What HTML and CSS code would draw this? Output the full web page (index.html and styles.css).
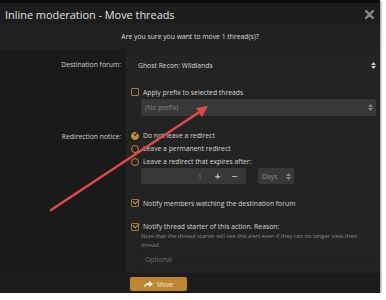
FILE: index.html
```html
<!DOCTYPE html>
<html lang="en">
<head>
  <meta charset="UTF-8">
  <title>Inline moderation - Move threads</title>
  <link rel="stylesheet" href="styles.css">
</head>
<body>
  <div class="overlay">
    <div class="dialog">
      <div class="title-bar">
        <span class="title">Inline moderation - Move threads</span>
        <svg class="close" width="9" height="9" viewBox="0 0 9 9">
          <path d="M1 1 L8 8 M8 1 L1 8" stroke="#8a8a80" stroke-width="2.4" stroke-linecap="round"/>
        </svg>
      </div>

      <div class="message">Are you sure you want to move 1 thread(s)?</div>

      <div class="form">
        <div class="label row-dest">Destination forum:</div>
        <div class="field row-dest">
          <div class="select plain">
            <span>Ghost Recon: Wildlands</span>
            <svg class="arrows" width="5" height="7" viewBox="0 0 5 7"><path d="M0 3 L2.5 0 L5 3 Z M0 4 L2.5 7 L5 4 Z" fill="#ccc"/></svg>
          </div>
        </div>

        <div class="label"></div>
        <div class="field row-prefix">
          <label class="check"><span class="box"></span>Apply prefix to selected threads</label>
          <div class="select filled">
            <span class="muted">(No prefix)</span>
            <svg class="arrows" width="5" height="7" viewBox="0 0 5 7"><path d="M0 3 L2.5 0 L5 3 Z M0 4 L2.5 7 L5 4 Z" fill="#888"/></svg>
          </div>
        </div>

        <div class="label row-redirect">Redirection notice:</div>
        <div class="field row-redirect">
          <label class="check"><span class="radio on"></span>Do not leave a redirect</label>
          <label class="check"><span class="radio"></span>Leave a permanent redirect</label>
          <label class="check"><span class="radio"></span>Leave a redirect that expires after:</label>
          <div class="expire">
            <div class="number">
              <span class="num">1</span>
              <span class="step">+</span>
              <span class="step">&minus;</span>
            </div>
            <div class="select filled days">
              <span class="muted">Days</span>
              <svg class="arrows" width="5" height="7" viewBox="0 0 5 7"><path d="M0 3 L2.5 0 L5 3 Z M0 4 L2.5 7 L5 4 Z" fill="#888"/></svg>
            </div>
          </div>
        </div>

        <div class="label"></div>
        <div class="field row-watch">
          <label class="check"><span class="box on"></span>Notify members watching the destination forum</label>
        </div>

        <div class="label"></div>
        <div class="field row-starter">
          <label class="check"><span class="box on"></span>Notify thread starter of this action. Reason:</label>
          <p class="hint">Note that the thread starter will see this alert even if they can no longer view their thread.</p>
          <div class="textarea">Optional</div>
        </div>
      </div>

      <div class="footer">
        <button class="btn">
          <svg width="9" height="8" viewBox="0 0 9 8"><path d="M0 7.5 C0.5 4 2.5 3 5.2 3 V1 L9 4 L5.2 7 V5 C3 5 1.5 5.6 0 7.5 Z" fill="#fff"/></svg>
          Move
        </button>
      </div>
    </div>
  </div>

  <svg class="annotation" width="386" height="300" viewBox="0 0 386 300">
    <line x1="51" y1="210" x2="201" y2="111" stroke="#e0484a" stroke-width="2.6" stroke-linecap="round"/>
    <path d="M208 106 L196 108 L202 117 Z" fill="#e0484a"/>
  </svg>
</body>
</html>
```

FILE: styles.css
```css
body {
  margin: 0;
  background: #fff;
  font-family: "Open Sans", "Noto Sans", sans-serif;
  color: #d6d6d6;
}

.overlay {
  width: 380px;
  height: 293px;
  border-top: 3px solid #0b0b0b;
  box-sizing: border-box;
  box-shadow: 1px 1px 2px rgba(0, 0, 0, 0.45);
}

.dialog {
  height: 100%;
  background: #1c1c1c;
  display: flex;
  flex-direction: column;
}

.dialog > * {
  flex-shrink: 0;
}

.title-bar {
  height: 22px;
  display: flex;
  align-items: center;
  justify-content: space-between;
  padding: 0 6px 0 5px;
  background: #1d1d1d;
}

.title {
  font-size: 10.9px;
  color: #e2e2e2;
}

.close {
  margin-top: 1px;
}

.message {
  height: 25px;
  line-height: 23px;
  text-align: center;
  font-size: 6.8px;
  color: #dcdcdc;
  background: #212121;
}

.form {
  display: grid;
  grid-template-columns: 126px 1fr;
  font-size: 6.8px;
}

.label {
  background: #1a1a1a;
  text-align: right;
  padding-right: 5px;
  color: #d0d0d0;
}

.field {
  background: #232323;
  padding-left: 5px;
  padding-right: 4px;
}

.label.row-dest {
  padding-top: 10px;
}

.field.row-dest {
  padding-top: 7px;
  padding-bottom: 7px;
}

.select {
  display: flex;
  align-items: center;
  justify-content: space-between;
  height: 16px;
  padding: 0 3px 0 4px;
}

.select.plain {
  padding-left: 7px;
  padding-right: 0;
}

.select.filled {
  background: #383838;
  margin-left: 10px;
  border-radius: 2px;
}

.muted {
  color: #8a8a8a;
}

.row-prefix {
  padding-top: 6px;
  padding-bottom: 6px;
}

.check {
  display: flex;
  align-items: center;
  gap: 4px;
  height: 12px;
}

.row-prefix .check {
  margin-bottom: 1px;
}

.row-prefix .select {
  height: 17px;
}

.box {
  width: 6px;
  height: 6px;
  border: 1px solid #a47a2c;
  border-radius: 1px;
  position: relative;
}

.box.on::after {
  content: "";
  position: absolute;
  left: 1px;
  top: -1px;
  width: 5px;
  height: 3px;
  border-left: 1.6px solid #d49a36;
  border-bottom: 1.6px solid #d49a36;
  transform: rotate(-45deg);
}

.radio {
  width: 6px;
  height: 6px;
  border: 1px solid #c08a30;
  border-radius: 50%;
  position: relative;
}

.radio.on {
  background: #c08a30;
}

.radio.on::after {
  content: "";
  position: absolute;
  left: 1.6px;
  top: 0.8px;
  width: 2.6px;
  height: 1.4px;
  border-left: 1px solid #222;
  border-bottom: 1px solid #222;
  transform: rotate(-45deg);
}

.row-redirect .check {
  height: 13px;
}

.label.row-redirect {
  padding-top: 10px;
}

.field.row-redirect {
  padding-top: 7px;
  padding-bottom: 6px;
}

.expire {
  display: flex;
  gap: 2px;
  margin-left: 10px;
}

.number {
  width: 105px;
  height: 16px;
  background: #383838;
  border-radius: 2px;
  display: flex;
  align-items: center;
  justify-content: flex-end;
  padding-right: 3px;
  box-sizing: border-box;
  color: #8a8a8a;
}

.num {
  margin-right: 7px;
}

.step {
  width: 17px;
  text-align: center;
  font-size: 10px;
  font-weight: bold;
  color: #b8b8b8;
}

.days {
  margin-left: 0;
  width: 36px;
  box-sizing: border-box;
}

.row-watch {
  padding-top: 7px;
  padding-bottom: 6px;
}

.row-starter {
  padding-top: 6px;
  padding-bottom: 4px;
}

.row-starter .check {
  height: 11px;
}

.hint {
  margin: 0 0 0 10px;
  font-size: 5.7px;
  line-height: 9px;
  color: #8a8a8a;
}

.textarea {
  margin-left: 10px;
  margin-top: 1px;
  height: 18px;
  line-height: 18px;
  padding-left: 4px;
  color: #6e6e6e;
  font-size: 6.8px;
  background: #222;
}

.footer {
  flex: 1;
  padding: 4px 0 0 130px;
  background: #1c1c1c;
}

.btn {
  width: 57px;
  height: 14px;
  border: none;
  border-radius: 2px;
  background: #bf8730;
  color: #f4e8d4;
  font-family: "Open Sans", sans-serif;
  font-size: 6.2px;
  display: flex;
  align-items: center;
  justify-content: center;
  gap: 4px;
  padding: 0;
}

.annotation {
  position: absolute;
  left: 0;
  top: 0;
  pointer-events: none;
}
```
